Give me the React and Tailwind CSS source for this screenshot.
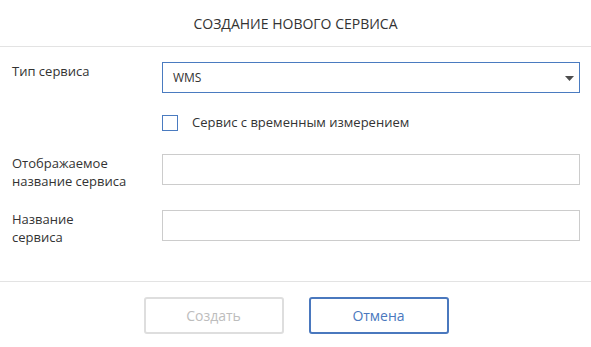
import { useState } from "react";

const FormRow = ({ label, className = "", children }) => (
    <div className={`flex items-start ${className}`}>
        <div className="w-[150px] shrink-0 text-[13px] leading-[18px] text-[#333]">{label}</div>
        <div className="flex-1">{children}</div>
    </div>
);

const App = () => {
    const [temporal, setTemporal] = useState(false);
    return (
        <div className="w-[591px] h-[347px] bg-white font-['Open_Sans',sans-serif] text-[#333]">
            <div className="h-[47px] flex items-center justify-center border-b border-[#e3e3e3] text-[14px] pt-[1px]">
                СОЗДАНИЕ НОВОГО СЕРВИСА
            </div>

            <div className="pl-3 pr-[11px] pt-[15px] pb-[35px] border-b border-[#e3e3e3]">
                <FormRow label="Тип сервиса">
                    <div className="relative h-[31px] border border-[#4a7bc0] flex items-center pl-[10px] text-[12px] text-[#333]">
                        WMS
                        <svg className="absolute right-[5px] top-[13px]" width="9" height="5" viewBox="0 0 9 5">
                            <path d="M0 0 H9 L4.5 5 Z" fill="#4d4d4d" />
                        </svg>
                    </div>
                </FormRow>

                <div className="flex items-center ml-[150px] mt-[22px] h-[16px]">
                    <button
                        onClick={() => setTemporal(!temporal)}
                        className="w-[16px] h-[16px] border border-[#4a7bc0] bg-white flex items-center justify-center"
                    >
                        {temporal && <span className="w-[8px] h-[8px] bg-[#4a7bc0]" />}
                    </button>
                    <span className="ml-[14px] text-[13px] text-[#333]">Сервис с временным измерением</span>
                </div>

                <FormRow className="mt-[23px]" label={<>Отображаемое<br />название сервиса</>}>
                    <input className="w-full h-[31px] border border-[#cccccc] outline-none px-2 text-[13px]" />
                </FormRow>

                <FormRow className="mt-[20px]" label={<>Название<br />сервиса</>}>
                    <input className="w-full h-[31px] border border-[#cccccc] outline-none px-2 text-[13px]" />
                </FormRow>
            </div>

            <div className="flex justify-center gap-[25px] pt-[15px] pl-[1px]">
                <button
                    disabled
                    className="w-[140px] h-[37px] border-2 border-[#dedede] rounded-[3px] text-[14px] text-[#bdbdbd] bg-white"
                >
                    Создать
                </button>
                <button className="w-[140px] h-[37px] border-2 border-[#4a78be] rounded-[3px] text-[14px] text-[#4a78be] bg-white">
                    Отмена
                </button>
            </div>
        </div>
    );
};

export default App;
